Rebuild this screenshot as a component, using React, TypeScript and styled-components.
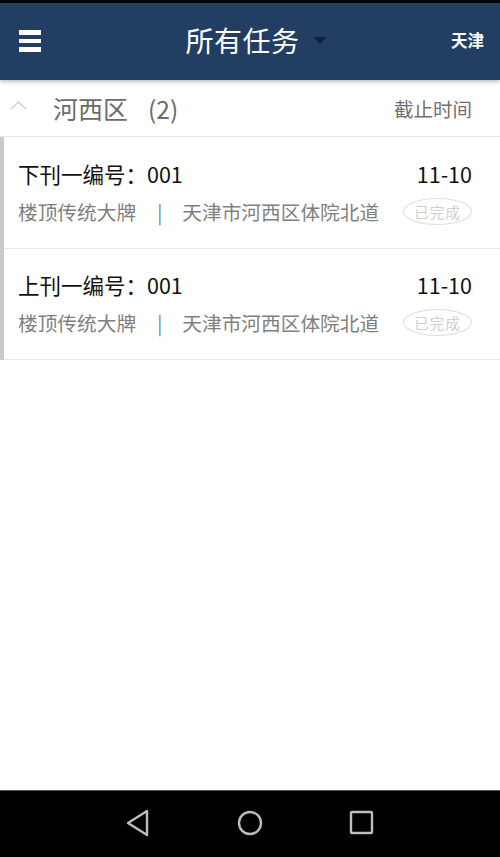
import styled, { createGlobalStyle } from 'styled-components';

const GlobalStyle = createGlobalStyle`
  html, body {
    margin: 0;
    padding: 0;
    height: 100%;
    background: #fff;
  }
  #root {
    height: 100%;
  }
  * {
    box-sizing: border-box;
  }
`;

const Screen = styled.div`
  width: 500px;
  height: 857px;
  display: flex;
  flex-direction: column;
  font-family: "Noto Sans CJK SC", "Noto Sans", sans-serif;
  background: #fff;
  overflow: hidden;
`;

const StatusStrip = styled.div`
  height: 3px;
  background: #000;
`;

const Header = styled.div`
  height: 77px;
  background: #223e62;
  display: flex;
  align-items: center;
  padding: 0 16px 0 19px;
  box-shadow: 0 2px 4px rgba(0, 0, 0, 0.25);
  position: relative;
  z-index: 1;
`;

const Burger = styled.div`
  width: 22px;
  display: flex;
  flex-direction: column;
  gap: 4px;
  margin-top: -1px;

  span {
    display: block;
    height: 4.5px;
    background: #fff;
  }
`;

const TitleWrap = styled.div`
  flex: 1;
  display: flex;
  justify-content: center;
  align-items: center;
  padding-left: 20px;
  margin-top: -4px;
`;

const HeaderTitle = styled.span`
  color: #fff;
  font-size: 28px;
  letter-spacing: 0.5px;
`;

const Caret = styled.span`
  width: 0;
  height: 0;
  margin-left: 13px;
  margin-top: 2px;
  border-left: 7px solid transparent;
  border-right: 7px solid transparent;
  border-top: 7px solid #12223a;
`;

const City = styled.span`
  color: #fff;
  font-size: 16.5px;
  font-weight: bold;
  margin-top: -4px;
`;

const GroupBar = styled.div`
  height: 57px;
  display: flex;
  align-items: center;
  padding: 0 28px 0 10px;
  border-bottom: 1px solid #e6e6e6;
  color: #6b6b6b;
`;

const Chevron = styled.svg`
  width: 17px;
  height: 10px;
  margin-top: -6px;
`;

const GroupName = styled.span`
  font-size: 25px;
  margin-left: 26px;
`;

const GroupCount = styled.span`
  font-size: 24.5px;
  margin-left: 20px;
`;

const Deadline = styled.span`
  margin-left: auto;
  font-size: 19.5px;
  color: #707070;
`;

const List = styled.div`
  border-left: 4px solid #c9c9c9;
`;

const Card = styled.div`
  height: 111.5px;
  padding: 22px 28px 0 14px;
  border-bottom: 1px solid #e8e8e8;
  display: flex;
  flex-direction: column;
  gap: 10px;
`;

const Row = styled.div`
  display: flex;
  align-items: center;
  height: 28px;
`;

const CardTitle = styled.span`
  font-size: 21.5px;
  color: #111;
`;

const DateText = styled.span`
  margin-left: auto;
  font-size: 21.5px;
  color: #111;
`;

const Sub = styled.span`
  font-size: 19.7px;
  color: #7f7f7f;
`;

const Pipe = styled.span`
  font-size: 19px;
  color: #7f7f7f;
  margin: 0 20px 0 21px;
`;

const Badge = styled.span`
  margin-left: auto;
  width: 69px;
  height: 27px;
  border: 1px solid #dedede;
  border-radius: 50%;
  display: flex;
  align-items: center;
  justify-content: center;
  font-size: 14.5px;
  color: #cfcfcf;
  letter-spacing: 1px;
`;

const Spacer = styled.div`
  flex: 1;
`;

const NavBar = styled.div`
  height: 67px;
  background: #000;
  border-top: 1px solid #555;
  display: flex;
  justify-content: center;
  align-items: center;
  gap: 86px;
  padding-bottom: 2px;
`;

const NavIcon = styled.svg`
  width: 26px;
  height: 28px;
`;

const tasks = [
  { title: '下刊一编号：001', date: '11-10' },
  { title: '上刊一编号：001', date: '11-10' },
];

export default function App() {
  return (
    <Screen>
      <GlobalStyle />
      <StatusStrip />
      <Header>
        <Burger>
          <span />
          <span />
          <span />
        </Burger>
        <TitleWrap>
          <HeaderTitle>所有任务</HeaderTitle>
          <Caret />
        </TitleWrap>
        <City>天津</City>
      </Header>
      <GroupBar>
        <Chevron viewBox="0 0 17 10">
          <polyline points="1,9 8.5,2 16,9" fill="none" stroke="#d2d2d2" strokeWidth="1.6" />
        </Chevron>
        <GroupName>河西区</GroupName>
        <GroupCount>(2)</GroupCount>
        <Deadline>截止时间</Deadline>
      </GroupBar>
      <List>
        {tasks.map((t) => (
          <Card key={t.title}>
            <Row>
              <CardTitle>{t.title}</CardTitle>
              <DateText>{t.date}</DateText>
            </Row>
            <Row>
              <Sub>楼顶传统大牌</Sub>
              <Pipe>|</Pipe>
              <Sub>天津市河西区体院北道</Sub>
              <Badge>已完成</Badge>
            </Row>
          </Card>
        ))}
      </List>
      <Spacer />
      <NavBar>
        <NavIcon viewBox="0 0 26 28">
          <polygon points="22,2 22,26 3,14" fill="none" stroke="#bdbdbd" strokeWidth="2.4" strokeLinejoin="round" />
        </NavIcon>
        <NavIcon viewBox="0 0 26 28">
          <circle cx="13" cy="14" r="11" fill="none" stroke="#bdbdbd" strokeWidth="2.4" />
        </NavIcon>
        <NavIcon viewBox="0 0 26 28">
          <rect x="2" y="3" width="21" height="21" rx="1" fill="none" stroke="#bdbdbd" strokeWidth="2.4" />
        </NavIcon>
      </NavBar>
    </Screen>
  );
}
